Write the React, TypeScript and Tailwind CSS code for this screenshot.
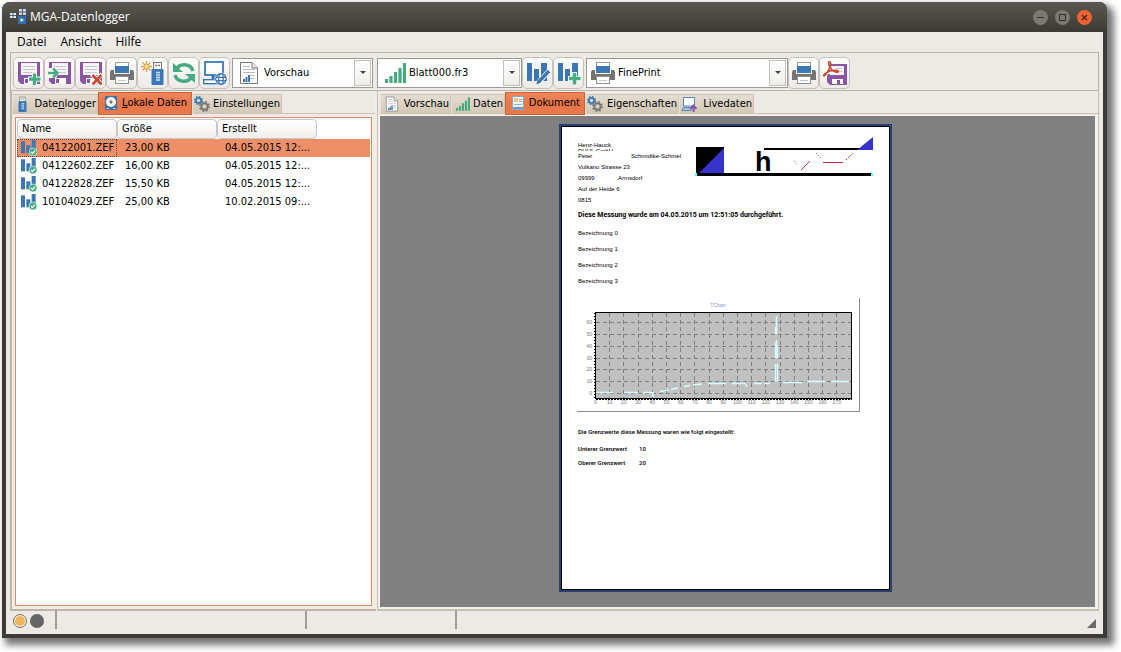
import type { ReactNode } from "react";
import clsx from "clsx";

type IconProps = { className?: string };

const PURPLE = "#8a55a5";
const BLUE = "#3b76b5";
const GREEN = "#45ab80";
const GRAY = "#737373";

/* ---------- icons ---------- */

function Floppy() {
  return (
    <>
      <path d="M1 1H23V23H4L1 20Z" fill={PURPLE} />
      <rect x="4" y="2" width="16" height="12" fill="#f7f5f8" />
      <path d="M6 5.5H18M6 8.5H18M6 11.5H18" stroke="#c5c5c9" />
      <rect x="7" y="17" width="11" height="6" fill="#fff" />
      <rect x="8" y="18" width="3" height="4" fill={PURPLE} />
    </>
  );
}

function SaveAddIcon({ className }: IconProps) {
  return (
    <svg viewBox="0 0 24 24" className={className}>
      <Floppy />
      <path d="M17.5 11.5V24M11 18H24" stroke="#fff" strokeWidth="5" />
      <path d="M17.5 12.500V24M12 18.200H23.500" stroke={GREEN} strokeWidth="3.200" />
    </svg>
  );
}

function SaveInIcon({ className }: IconProps) {
  return (
    <svg viewBox="0 0 24 24" className={className}>
      <Floppy />
      <path d="M0 7H8L11 12L8 17H0Z" fill="#fff" />
      <path d="M0 12H9M5 7.500L9.500 12L5 16.500" fill="none" stroke={GREEN} strokeWidth="2.500" />
    </svg>
  );
}

function SaveDeleteIcon({ className }: IconProps) {
  return (
    <svg viewBox="0 0 24 24" className={className}>
      <Floppy />
      <path d="M12.500 13L23 24M23 13L12.500 24" stroke="#fff" strokeWidth="4.500" />
      <path d="M13.500 14L22.500 23.500M22.500 14L13.500 23.500" stroke="#cb4a31" strokeWidth="2.800" />
    </svg>
  );
}

function PrinterIcon({ className }: IconProps) {
  return (
    <svg viewBox="0 0 24 24" className={className}>
      <rect x="5.500" y="1.500" width="13" height="7" fill="#fff" stroke="#999" />
      <path d="M1 9H4V13H20V9H23L24 11V19H0V11Z" fill={GRAY} />
      <rect x="5" y="5" width="14" height="7" fill={BLUE} />
      <rect x="5.500" y="15.500" width="13" height="7" fill="#fff" stroke="#8f8f8f" />
      <path d="M8 19.500H16" stroke="#c3c7cc" />
    </svg>
  );
}

function UsbBody() {
  return (
    <>
      <rect x="12.500" y="1.500" width="8" height="7" fill="#fff" stroke="#777" />
      <path d="M14 4.500H16M17 4.500H19" stroke="#777" strokeWidth="1.500" />
      <rect x="10.500" y="8" width="12" height="16" rx="1" fill={BLUE} />
      <path d="M15 11.500H19M15 14H19M15 16.500H19M15 19H19" stroke="#dbe7f2" strokeWidth="1.400" />
      <path d="M17 11V20" stroke="#9dbcd9" />
    </>
  );
}

function UsbNewIcon({ className }: IconProps) {
  return (
    <svg viewBox="0 0 24 24" className={className}>
      <path
        d="M5.500 0V11M0 5.500H11M1.500 1.500L9.500 9.500M9.500 1.500L1.500 9.500"
        stroke="#e5a548"
        strokeWidth="1.400"
      />
      <circle cx="5.500" cy="5.500" r="2.500" fill="#ffdf9d" stroke="#e5a548" />
      <UsbBody />
    </svg>
  );
}

function UsbIcon({ className }: IconProps) {
  return (
    <svg viewBox="10 0 13 24" className={className}>
      <UsbBody />
    </svg>
  );
}

function RefreshIcon({ className }: IconProps) {
  return (
    <svg viewBox="0 0 24 24" className={className}>
      <path d="M4 9A9 8.500 0 0 1 21 10" fill="none" stroke={GREEN} strokeWidth="3.400" />
      <path d="M20 15A9 8.500 0 0 1 3 14" fill="none" stroke={GREEN} strokeWidth="3.400" />
      <path d="M1 2V11H11Z" fill={GREEN} />
      <path d="M23 22V13H13Z" fill={GREEN} />
    </svg>
  );
}

function ComputerNetIcon({ className }: IconProps) {
  return (
    <svg viewBox="0 0 24 24" className={className}>
      <rect x="2" y="1" width="18" height="13" fill="#fff" stroke={BLUE} strokeWidth="1.800" />
      <path d="M11 14V18" stroke={BLUE} strokeWidth="5" />
      <rect x="0.700" y="18.700" width="15" height="4" fill="#fff" stroke={BLUE} strokeWidth="1.400" />
      <circle cx="18" cy="18" r="6.500" fill="#fff" />
      <g fill="none" stroke={BLUE} strokeWidth="1.200">
        <circle cx="18" cy="18" r="5.300" />
        <ellipse cx="18" cy="18" rx="2.300" ry="5.300" />
        <path d="M13 16.300H23M13 19.700H23" />
      </g>
    </svg>
  );
}

function ReportIcon({ className }: IconProps) {
  return (
    <svg viewBox="0 0 24 24" className={className}>
      <path d="M3.500 1.500H15L20.500 7V22.500H3.500Z" fill="#fff" stroke="#777" />
      <path d="M15 1.500V7H20.500" fill="#eee" stroke="#777" />
      <path d="M6 5.500H13M6 8.500H18M6 11.500H18M13 14.500H18M13 17.500H18" stroke="#b9b9b9" />
      <path d="M7 21V18M9.500 21V16M12 21V14" stroke={BLUE} strokeWidth="2" />
    </svg>
  );
}

function SignalIcon({ className }: IconProps) {
  return (
    <svg viewBox="0 0 24 24" className={className}>
      <path d="M4.500 22V18M9 22V15M13.500 22V11M18 22V7M22.500 22V2" stroke={GREEN} strokeWidth="3.200" />
    </svg>
  );
}

function BarsShape() {
  return (
    <>
      <rect x="1" y="2" width="5" height="18" fill={BLUE} />
      <rect x="8" y="8" width="5" height="12" fill={BLUE} />
      <rect x="15" y="2" width="6" height="18" fill={BLUE} />
    </>
  );
}

function BarsEditIcon({ className }: IconProps) {
  return (
    <svg viewBox="0 0 24 24" className={className}>
      <BarsShape />
      <path d="M12 22L23 10" stroke="#fff" strokeWidth="5" />
      <path d="M13 20.500L23 10" stroke={BLUE} strokeWidth="3.400" />
      <path d="M10.500 23.500L11.500 18.500L15 21.500Z" fill={BLUE} />
    </svg>
  );
}

function BarsAddIcon({ className }: IconProps) {
  return (
    <svg viewBox="0 0 24 24" className={className}>
      <BarsShape />
      <path d="M17.500 11V24M11 17.500H24" stroke="#fff" strokeWidth="5" />
      <path d="M17.500 12V23.500M12 17.500H23.500" stroke={GREEN} strokeWidth="3.500" />
    </svg>
  );
}

function BarsCheckIcon({ className }: IconProps) {
  return (
    <svg viewBox="0 0 24 24" className={className}>
      <rect x="0" y="2" width="6" height="18" fill={BLUE} />
      <rect x="8" y="8" width="6" height="12" fill={BLUE} />
      <rect x="16" y="0" width="6" height="16" fill={BLUE} />
      <circle cx="18" cy="18" r="6" fill={GREEN} stroke="#e8f5ee" />
      <path d="M15 18L17.300 20.300L21 16" fill="none" stroke="#fff" strokeWidth="1.800" />
    </svg>
  );
}

function PdfSaveIcon({ className }: IconProps) {
  return (
    <svg viewBox="0 0 24 24" className={className}>
      <path d="M4 3H24V24H7L4 21Z" fill={PURPLE} />
      <rect x="7" y="5" width="14" height="9" fill="#f7f5f8" />
      <path d="M13 7.500H19M13 10.500H19" stroke="#c5c5c9" />
      <rect x="9" y="18" width="11" height="5" fill="#fff" />
      <rect x="14" y="19" width="3" height="4" fill={PURPLE} />
      <path d="M0 0H8V5L13 11V13H5L4 15H0Z" fill="#fff" />
      <path
        d="M7 1C5 0 5 3 7 6C9 10 13 12 15 11C17 9 8 8 3 12C-1 15 1 16 3 13C6 9 9 3 7 1Z"
        fill="#fff"
        stroke="#cb4a31"
        strokeWidth="1.600"
      />
    </svg>
  );
}

function DiskIcon({ className }: IconProps) {
  return (
    <svg viewBox="0 0 16 16" className={className}>
      <rect x="2" y="1" width="12" height="14" rx="1" fill="#3c6ea3" />
      <circle cx="8" cy="7" r="5" fill="#fff" />
      <circle cx="8" cy="7" r="1.700" fill="#777" />
      <path d="M3.500 13.500H6M10 13.500H12.500" stroke="#cfe0ef" />
    </svg>
  );
}

function GearsIcon({ className }: IconProps) {
  return (
    <svg viewBox="0 0 16 16" className={className}>
      <circle cx="4.500" cy="4.500" r="2.600" fill="none" stroke="#3d78ae" strokeWidth="1.800" />
      <circle cx="4.500" cy="4.500" r="4" fill="none" stroke="#3d78ae" strokeWidth="1.200" strokeDasharray="1.600 1.540" />
      <circle cx="10.500" cy="10.500" r="3.200" fill="none" stroke="#777" strokeWidth="2" />
      <circle cx="10.500" cy="10.500" r="4.800" fill="none" stroke="#777" strokeWidth="1.500" strokeDasharray="1.900 1.870" />
    </svg>
  );
}

function DocumentIcon({ className }: IconProps) {
  return (
    <svg viewBox="0 0 16 16" className={className}>
      <rect x="2.500" y="1.500" width="11" height="13" fill="#f4f4ef" stroke="#8aa9c2" />
      <rect x="4" y="3" width="4" height="4" fill="#efc983" />
      <path d="M9 4.500H12M9 6.500H12M4 9.500H12" stroke="#8fb3d1" />
      <rect x="3" y="12" width="10" height="2" fill="#7699b8" />
    </svg>
  );
}

function LiveIcon({ className }: IconProps) {
  return (
    <svg viewBox="0 0 16 16" className={className}>
      <rect x="2.500" y="1.500" width="11" height="8.500" fill="#fff" stroke="#5e88bb" />
      <path d="M1 14.500L2.500 11.500H10V14.500Z" fill="#a9c3df" stroke="#5e88bb" />
      <path d="M12.500 16V10M9.500 13L12.500 9.500L15.500 13" fill="none" stroke={PURPLE} strokeWidth="2" />
    </svg>
  );
}

function AppIcon({ className }: IconProps) {
  return (
    <svg viewBox="0 0 16 16" className={className}>
      <rect x="0" y="4" width="6" height="5" fill="#e8edf2" />
      <path d="M3 4V9M0 6.500H6" stroke="#3c5f82" />
      <rect x="9" y="0" width="7" height="6" fill="#cdd9e5" />
      <path d="M12.500 0V6M9 3H16" stroke="#3c5f82" />
      <rect x="8" y="7" width="8" height="8" fill="#2e6fae" />
      <path d="M10.500 9L14 11L10.500 13Z" fill="#fff" />
    </svg>
  );
}

/* ---------- controls ---------- */

function ToolButton({ label, children }: { label: string; children: ReactNode }) {
  return (
    <button
      aria-label={label}
      title={label}
      className="w-[31px] h-8 flex shrink-0 items-center justify-center rounded-[5px] border border-[#c5c2bc] bg-linear-to-b from-[#fdfdfc] to-[#eeebe7]"
    >
      {children}
    </button>
  );
}

type ComboProps = { label: string; value: string; className: string; children: ReactNode };

function Combo({ label, value, className, children }: ComboProps) {
  return (
    <div className={clsx("relative h-[30px] shrink-0", className)}>
      <select
        aria-label={label}
        className="appearance-none w-full h-full pl-[31px] pr-5 bg-white border border-[#9b9a97] outline-none text-[11px]"
      >
        <option>{value}</option>
      </select>
      <span className="absolute left-[5px] top-[3px] pointer-events-none">{children}</span>
      <span className="absolute right-[2px] top-[2px] bottom-[2px] w-[17px] flex items-center justify-center border border-[#c2c0bd] bg-linear-to-b from-white to-[#efedea] pointer-events-none">
        <span className="border-x-[3px] border-t-[3px] border-x-transparent border-t-[#444]" />
      </span>
    </div>
  );
}

type TabProps = { icon: ReactNode; active?: boolean; className: string; children: ReactNode };

function Tab({ icon, active, className, children }: TabProps) {
  return (
    <button
      role="tab"
      aria-selected={!!active}
      className={clsx(
        "flex shrink-0 items-center justify-between whitespace-nowrap border",
        active
          ? "h-[23px] px-1 pb-[2px] border-[#cf6338] bg-linear-to-b from-[#f0875d] via-[#e87545] to-[#e67a4e]"
          : "h-5 mt-[2px] pl-[3px] pr-px border-[#cfc4b0] border-l-[#e9e2d6] bg-linear-to-b from-[#e4ddd2] to-[#d3c8b6]",
        className
      )}
    >
      {icon}
      <span>{children}</span>
    </button>
  );
}

/* ---------- left side ---------- */

const FILES = [
  { name: "04122001.ZEF", size: "23,00 KB", created: "04.05.2015 12:..." },
  { name: "04122602.ZEF", size: "16,00 KB", created: "04.05.2015 12:..." },
  { name: "04122828.ZEF", size: "15,50 KB", created: "04.05.2015 12:..." },
  { name: "10104029.ZEF", size: "25,00 KB", created: "10.02.2015 09:..." },
];

function FileList() {
  return (
    <div className="flex-1 mt-[2px] mx-[3px] mb-[3px] p-px bg-white border border-[#df8a68]">
      <table className="w-full table-fixed border-separate border-spacing-0">
        <thead>
          <tr className="h-5">
            {["Name", "Größe", "Erstellt"].map((title) => (
              <th
                key={title}
                className="w-[100px] p-0 pl-1 text-left font-normal leading-4 rounded border border-[#c9c7c4] bg-linear-to-b from-white to-[#f1efed]"
              >
                {title}
              </th>
            ))}
            <td />
          </tr>
        </thead>
        <tbody>
          {FILES.map((file, i) => (
            <tr key={file.name} className={clsx("h-[18px]", i === 0 && "bg-[#ee9067]")}>
              <td
                className={clsx(
                  "p-0 pl-[3px] border border-dotted",
                  i === 0 ? "border-[#6b4636]" : "border-transparent"
                )}
              >
                <div className="flex items-center gap-[5px] leading-4 whitespace-nowrap">
                  <BarsCheckIcon className="size-4 shrink-0" />
                  {file.name}
                </div>
              </td>
              <td className="p-0 pl-2 leading-4">{file.size}</td>
              <td className="p-0 pl-2 leading-4 whitespace-nowrap">{file.created}</td>
              <td />
            </tr>
          ))}
        </tbody>
      </table>
    </div>
  );
}

function DataPanel() {
  return (
    <section className="w-[366px] shrink-0 flex flex-col border-l-2 border-b-2 border-[#bcb5a8] bg-[#f3ede4] pr-[1px]">
      <div role="tablist" className="flex h-6 pt-px bg-[#edeae5]">
        <Tab icon={<UsbIcon className="w-[9px] h-4 ml-[2px]" />} className="w-[86px]">
          Date<u>n</u>logger
        </Tab>
        <Tab active icon={<DiskIcon className="size-4" />} className="w-[94px]">
          <u>L</u>okale Daten
        </Tab>
        <Tab icon={<GearsIcon className="size-4 -ml-[2px]" />} className="w-[90px]">
          Einstellungen
        </Tab>
        <div className="flex-1 h-[22px] border-b border-[#cfc4b0]" />
      </div>
      <FileList />
    </section>
  );
}

/* ---------- report page ---------- */

function ReportLogo() {
  return (
    <svg viewBox="0 0 179 40" className="w-[179px] h-10 shrink-0">
      <rect x="1" y="10" width="28" height="27" fill="#000" />
      <path d="M29 11V37H3Z" fill="#3632cc" />
      <path d="M69 12H177" stroke="#000" strokeWidth="2" />
      <path d="M178 0V13H162Z" fill="#3632cc" />
      <path d="M0 37.500H178" stroke="#000" strokeWidth="3" />
      <path d="M1 36V39M177 36V39" stroke="#5ff" strokeWidth="2" />
      <text x="60" y="34" fontSize="27" fontWeight="700" fontFamily="Liberation Sans Narrow, Liberation Sans, sans-serif">
        h
      </text>
      <g stroke="#c8333b" fill="none">
        <path d="M99 24L102 28" strokeDasharray="1 2" />
        <path d="M106 33L115 24" />
        <path d="M121 16L126 21" strokeDasharray="1 2" />
        <path d="M128 25.500H148" />
        <path d="M151 23L158 16" strokeDasharray="2 1" />
      </g>
    </svg>
  );
}

const X_STEP = 14.2;
const Y_STEP = 11.77;

function MeasurementChart() {
  const columns = Array.from({ length: 18 }, (_, i) => i);
  const rows = Array.from({ length: 7 }, (_, i) => i);
  return (
    <svg viewBox="0 0 284 116" className="w-[284px] h-[116px]" fontFamily="Liberation Sans, sans-serif">
      <path d="M0 114.500H282.500V1" fill="none" stroke="#8d8d8d" />
      <text x="141" y="10" fontSize="5" textAnchor="middle" fill="#8f8fe0">
        TChart
      </text>
      <rect x="18.500" y="15.500" width="256" height="86" fill="#c0c0c0" />
      <g stroke="#808080" strokeDasharray="4 3">
        {columns.slice(1).map((i) => (
          <path key={i} d={`M${Math.round(18 + i * X_STEP) + 0.5} 16V101`} />
        ))}
        {rows.map((i) => (
          <path key={i} d={`M19 ${Math.round(96 - i * Y_STEP) + 0.5}H274`} />
        ))}
      </g>
      <rect x="18.500" y="15.500" width="256" height="86" fill="none" stroke="#000" />
      <path d="M19 102.500H275" stroke="#000" strokeDasharray="2 1" />
      <path d="M17.500 16V102" stroke="#000" strokeDasharray="1 2" />
      <g fontSize="5" fill="#777">
        {columns.map((i) => (
          <text key={i} x={18.5 + i * X_STEP} y="107" textAnchor="middle">
            {i * 10}
          </text>
        ))}
        {rows.map((i) => (
          <text key={i} x="15" y={98 - i * Y_STEP} textAnchor="end">
            {i * 10}
          </text>
        ))}
      </g>
      <g fill="none" stroke="#d5ffff" strokeWidth="1.400">
        <path d="M19 95.500H36M47 95.500H60L61 96.500M66 95.500H76V100" />
        <path d="M83 94.500L92 93M94 92.500L101 91M107 89.500L113 88.500M116 88L125 87M131 86.500H149M155 86.500H168L170 90M177 86.500H185M187 86.500H193M206 85.500H225M230 84.500H248M254 84.500H272" />
        <path d="M199.500 19V37M199.500 43V61M198.500 30V37M198.500 46V61M200.500 48V61M198.500 67V85M200.500 67V85" />
      </g>
    </svg>
  );
}

function ReportPage() {
  return (
    <article className="w-[333px] shrink-0 border-2 border-[#27406f] bg-white">
      <div className="h-full border border-black pl-4 pt-[10px] text-black font-['Liberation_Sans',Arial,sans-serif] text-[6px] leading-[11px]">
        <div className="flex">
          <div className="w-[117px] pt-[2px] whitespace-nowrap">
            <p className="h-[6px] leading-[12px]">Henz-Hauck</p>
            <p className="mt-[3px] h-[3px] overflow-hidden leading-[6px]">DUUL GmbH</p>
            <p className="flex">
              <span className="w-[53px]">Peter</span>
              <span>Schmidtke-Schmel</span>
            </p>
            <p>Vulkano Strasse 23</p>
            <p className="flex">
              <span className="w-10">09999</span>
              <span>Armsdorf</span>
            </p>
            <p>Auf der Heide 6</p>
            <p>0815</p>
          </div>
          <ReportLogo />
        </div>
        <h2 className="mt-1 text-[7px] leading-[11px] font-bold font-['Roboto',sans-serif]">
          Diese Messung wurde am 04.05.2015 um 12:51:05 durchgeführt.
        </h2>
        <ul className="mt-1 leading-4">
          {[0, 1, 2, 3].map((n) => (
            <li key={n}>Bezeichnung {n}</li>
          ))}
        </ul>
        <div className="mt-2 -ml-px">
          <MeasurementChart />
        </div>
        <div className="mt-3 leading-[14px] font-medium font-['Roboto',sans-serif]">
          <p>Die Grenzwerte diese Messung waren wie folgt eingestellt:</p>
          <dl className="mt-[3px] grid grid-cols-[61px_1fr]">
            <dt>Unterer Grenzwert</dt>
            <dd>10</dd>
            <dt>Oberer Grenzwert</dt>
            <dd>20</dd>
          </dl>
        </div>
      </div>
    </article>
  );
}

function ReportPanel() {
  return (
    <section className="flex-1 min-w-0 flex flex-col ml-px border-x border-b-2 border-[#c9bfae] bg-[#f3f2f0]">
      <div role="tablist" className="flex h-6 pt-px pl-[2px] bg-[#edeae5]">
        <Tab icon={<ReportIcon className="size-4" />} className="w-[71px]">
          Vorschau
        </Tab>
        <Tab icon={<SignalIcon className="size-4 -ml-px" />} className="w-[54px]">
          Daten
        </Tab>
        <Tab active icon={<DocumentIcon className="size-4" />} className="w-20">
          Dokument
        </Tab>
        <Tab icon={<GearsIcon className="size-4 -ml-[2px]" />} className="w-[94px]">
          Eigenschaften
        </Tab>
        <Tab icon={<LiveIcon className="size-4 -ml-[2px]" />} className="w-[75px]">
          Livedaten
        </Tab>
        <div className="flex-1 h-[22px] border-b border-[#cfc4b0]" />
      </div>
      <div className="flex-1 flex justify-center mt-px ml-[2px] mr-[3px] mb-[2px] pt-2 pr-6 pb-[15px] bg-[#808080]">
        <ReportPage />
      </div>
    </section>
  );
}

/* ---------- window ---------- */

function TitleBar() {
  return (
    <header className="h-[30px] shrink-0 flex items-center gap-1 px-2 rounded-t-lg bg-linear-to-b from-[#5a5851] to-[#3b3a35]">
      <AppIcon className="size-4" />
      <h1 className="flex-1 text-xs text-white font-['Open_Sans',sans-serif]">MGA-Datenlogger</h1>
      <div className="flex gap-[7px] pr-[7px]">
        <button aria-label="Minimieren" className="size-[15px] rounded-full bg-[#7b7972]">
          <svg viewBox="0 0 15 15" stroke="#33322e">
            <path d="M4 7.500H11" />
          </svg>
        </button>
        <button aria-label="Maximieren" className="size-[15px] rounded-full bg-[#7b7972]">
          <svg viewBox="0 0 15 15" fill="none" stroke="#33322e">
            <rect x="4.500" y="4.500" width="6" height="6" />
          </svg>
        </button>
        <button aria-label="Schließen" className="size-[15px] rounded-full bg-[#ed6332]">
          <svg viewBox="0 0 15 15" stroke="#4a2215" strokeWidth="1.300">
            <path d="M5 5L10 10M10 5L5 10" />
          </svg>
        </button>
      </div>
    </header>
  );
}

function Toolbar() {
  return (
    <div className="mx-1 h-[39px] shrink-0 flex items-center gap-1 px-[2px] pt-[2px] border border-[#b9b5ad]">
      <div className="flex">
        <ToolButton label="Speichern unter"><SaveAddIcon className="size-6" /></ToolButton>
        <ToolButton label="Importieren"><SaveInIcon className="size-6" /></ToolButton>
        <ToolButton label="Löschen"><SaveDeleteIcon className="size-6" /></ToolButton>
        <ToolButton label="Drucken"><PrinterIcon className="size-6" /></ToolButton>
        <ToolButton label="Neuer Logger"><UsbNewIcon className="size-6" /></ToolButton>
        <ToolButton label="Aktualisieren"><RefreshIcon className="size-6" /></ToolButton>
        <ToolButton label="Netzwerk"><ComputerNetIcon className="size-6" /></ToolButton>
      </div>
      <Combo label="Ansicht" value="Vorschau" className="w-[141px] -ml-[2px]">
        <ReportIcon className="size-6" />
      </Combo>
      <div className="flex items-center">
        <Combo label="Vorlage" value="Blatt000.fr3" className="w-[145px]">
          <SignalIcon className="size-6" />
        </Combo>
        <ToolButton label="Vorlage bearbeiten"><BarsEditIcon className="size-6" /></ToolButton>
        <ToolButton label="Vorlage hinzufügen"><BarsAddIcon className="size-6" /></ToolButton>
      </div>
      <div className="flex items-center -ml-[2px]">
        <Combo label="Drucker" value="FinePrint" className="w-[202px]">
          <PrinterIcon className="size-6" />
        </Combo>
        <ToolButton label="Bericht drucken"><PrinterIcon className="size-6" /></ToolButton>
        <ToolButton label="Als PDF speichern"><PdfSaveIcon className="size-6" /></ToolButton>
      </div>
    </div>
  );
}

function StatusBar() {
  return (
    <footer className="h-[23px] shrink-0 flex px-[7px]">
      <div className="w-[42px] flex items-center gap-[3px] pb-1">
        <span className="size-[14px] rounded-full border border-[#777] bg-[#ecb55e] ring-1 ring-inset ring-[#fff6e0]" />
        <span className="size-[14px] rounded-full bg-[#666]" />
      </div>
      <div className="w-[250px] h-[18px] border-l-2 border-[#a29f99]" />
      <div className="w-[150px] h-[18px] border-l-2 border-[#a29f99]" />
      <div className="flex-1 h-[18px] border-l-2 border-[#a29f99]" />
      <svg viewBox="0 0 10 10" className="size-[10px] mt-2">
        <path d="M10 0V9H1Z" fill="#6b6a66" />
      </svg>
    </footer>
  );
}

export default function App() {
  return (
    <div className="h-screen pt-[2px] pl-[2px] pr-[14px] pb-[14px] bg-white text-black text-[11px] leading-4 font-['DejaVu_Sans_Condensed','DejaVu_Sans',Tahoma,sans-serif]">
      <div className="h-full flex flex-col rounded-t-lg bg-[#3c3b37] shadow-[5px_5px_7px_2px_rgba(0,0,0,0.55)]">
        <TitleBar />
        <div className="flex-1 min-h-0 flex flex-col mx-1 mb-1 bg-[#edeae5]">
          <nav className="h-5 shrink-0 flex items-center gap-[14px] px-[11px] text-xs font-['Open_Sans',sans-serif]">
            <a href="#datei">Datei</a>
            <a href="#ansicht">Ansicht</a>
            <a href="#hilfe">Hilfe</a>
          </nav>
          <Toolbar />
          <main className="flex-1 min-h-0 flex mx-1">
            <DataPanel />
            <ReportPanel />
          </main>
          <StatusBar />
        </div>
      </div>
    </div>
  );
}
